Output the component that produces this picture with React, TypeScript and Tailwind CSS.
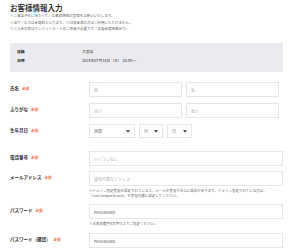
import { ReactNode } from 'react'

const font = { fontFamily: '"Noto Sans CJK JP", "Noto Sans", sans-serif' }

const Required = () => (
  <span className="ml-[3px] text-[3.5px] font-bold text-[#f0643c]">必須</span>
)

const Caret = () => (
  <svg width="4" height="3" viewBox="0 0 4 3" className="shrink-0">
    <polygon points="0,0 4,0 2,3" fill="#555" />
  </svg>
)

function Row({ label, children, className = '' }: { label: string; children: ReactNode; className?: string }) {
  return (
    <div className={`flex ${className}`}>
      <div className="w-[79px] shrink-0 pt-[3px] text-[4.5px] font-bold leading-[6px] text-[#333]">
        {label}
        <Required />
      </div>
      <div className="min-w-0 flex-1">{children}</div>
    </div>
  )
}

const Input = ({ placeholder, className = '', dark = false }: { placeholder: string; className?: string; dark?: boolean }) => (
  <div
    className={`flex h-[15px] items-center border border-[#e6e6e6] bg-white px-[4px] text-[4px] ${
      dark ? 'text-[#555]' : 'text-[#aaa]'
    } ${className}`}
  >
    {placeholder}
  </div>
)

const Select = ({ text, className = '' }: { text: string; className?: string }) => (
  <div
    className={`flex h-[14px] items-center justify-between border border-[#e6e6e6] bg-white px-[4px] text-[4px] text-[#777] ${className}`}
  >
    <span>{text}</span>
    <Caret />
  </div>
)

export default function App() {
  return (
    <div className="h-[250px] w-[300px] overflow-hidden bg-white pl-[10px] pr-[17px]" style={font}>
      <h1 className="pt-[3px] text-[7.5px] font-bold leading-[10px] text-[#333]">お客様情報入力</h1>

      <div className="text-[3.5px] leading-[6.5px] text-[#666]">
        <p>※ご来店予約にあたって、お客様情報の登録をお願いいたします。</p>
        <p>※当サービスは会員制となります。※18歳未満の方はご利用いただけません。</p>
        <p>※ご入会の際はクレジットカードのご用意が必要です（各種会員特典あり）</p>
      </div>

      <div className="mt-[10.5px] bg-[#ebebef] px-[7px] pb-[7.5px] pt-[3.5px] text-[3.8px] leading-[9px] text-[#333]">
        <div className="flex">
          <span className="w-[65px] font-bold">店舗</span>
          <span>大宮店</span>
        </div>
        <div className="flex">
          <span className="w-[65px] font-bold">日時</span>
          <span>2023年07月14日（木） 10:30～</span>
        </div>
      </div>

      <Row label="氏名" className="mt-[10px]">
        <div className="flex gap-[4px]">
          <Input placeholder="姓" className="w-[93px]" />
          <Input placeholder="名" className="w-[93px]" />
        </div>
      </Row>

      <Row label="ふりがな" className="mt-[6px]">
        <div className="flex gap-[4px]">
          <Input placeholder="せい" className="w-[93px]" />
          <Input placeholder="めい" className="w-[93px]" />
        </div>
      </Row>

      <Row label="生年月日" className="mt-[6px]">
        <div className="flex gap-[4px]">
          <Select text="西暦" className="w-[46px]" />
          <Select text="月" className="w-[24px]" />
          <Select text="日" className="w-[25px]" />
        </div>
      </Row>

      <Row label="電話番号" className="mt-[13px]">
        <Input placeholder="ハイフンなし" />
      </Row>

      <Row label="メールアドレス" className="mt-[5px]">
        <Input placeholder="受信可能なアドレス" />
        <div className="mt-[2px] whitespace-nowrap text-[3.5px] leading-[5px] text-[#666]">
          <p>※ドメイン指定受信を設定されていると、メールを受信できない場合があります。ドメイン指定されている方は、</p>
          <p>「mail.bodyechi.com」を受信可能に設定してください。</p>
        </div>
      </Row>

      <Row label="パスワード" className="mt-[6px]">
        <Input placeholder="PASSWORD" dark />
        <p className="mt-[2px] whitespace-nowrap text-[3.5px] leading-[5px] text-[#666]">※半角英数字8文字以上でご指定ください。</p>
      </Row>

      <Row label="パスワード（確認）" className="mt-[7px]">
        <Input placeholder="PASSWORD" dark />
      </Row>
    </div>
  )
}
